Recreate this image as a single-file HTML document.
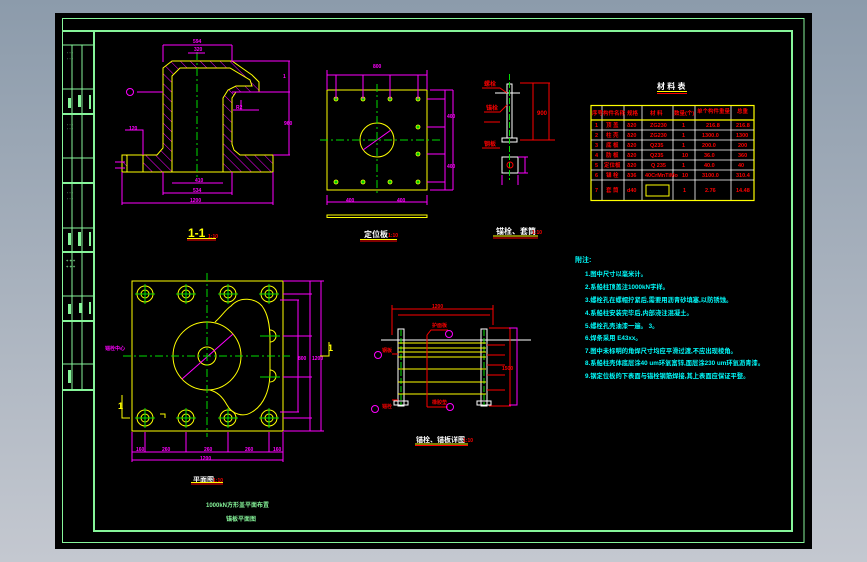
<!DOCTYPE html>
<html><head><meta charset="utf-8"><style>
html,body{margin:0;padding:0;width:867px;height:562px;overflow:hidden;background:linear-gradient(#8c9bab,#c4c8d0);}
svg{display:block}
text{font-family:"Liberation Sans","Noto Sans CJK SC",sans-serif;font-weight:bold}
</style></head><body>
<svg width="867" height="562" viewBox="0 0 867 562" xmlns="http://www.w3.org/2000/svg">
<defs>
<pattern id="h" width="7" height="7" patternUnits="userSpaceOnUse" patternTransform="rotate(-45)">
<line x1="0" y1="0" x2="0" y2="7" stroke="#ff00ff" stroke-width="1"/></pattern>
</defs>
<rect x="55" y="13" width="757" height="536" fill="#000"/>
<g fill="none" stroke="#86f59a">
<rect x="62.5" y="18.5" width="741.5" height="524" stroke-width="1"/>
<rect x="94" y="31" width="698" height="500" stroke-width="2"/>
<line x1="62" y1="31" x2="94" y2="31" stroke-width="2"/>
<g stroke-width="1"><line x1="62" y1="45" x2="94" y2="45"/><line x1="62" y1="89" x2="94" y2="89"/><line x1="62" y1="158" x2="94" y2="158"/><line x1="62" y1="228" x2="94" y2="228"/><line x1="62" y1="296" x2="94" y2="296"/><line x1="62" y1="364" x2="94" y2="364"/>
<line x1="72" y1="45" x2="72" y2="390"/><line x1="82" y1="45" x2="82" y2="390"/></g>
<g stroke-width="2"><line x1="62" y1="114" x2="94" y2="114"/><line x1="62" y1="183" x2="94" y2="183"/><line x1="62" y1="252" x2="94" y2="252"/><line x1="62" y1="321" x2="94" y2="321"/><line x1="62" y1="390" x2="94" y2="390"/></g>
</g>
<g fill="#86f59a" font-size="4">
<rect x="68" y="98" width="3" height="10"/><rect x="78" y="95" width="3" height="12"/><rect x="89" y="95" width="2" height="14"/>
<rect x="68" y="233" width="3" height="12"/><rect x="78" y="232" width="3" height="14"/><rect x="89" y="232" width="2" height="14"/>
<rect x="68" y="304" width="3" height="10"/><rect x="79" y="303" width="3" height="10"/><rect x="89" y="302" width="2" height="12"/>
<rect x="68" y="370" width="3" height="13"/>
<text x="67" y="54">· · ·</text><text x="67" y="60">· · ·</text><text x="67" y="126">· · ·</text><text x="67" y="130">· · ·</text><text x="67" y="194">· · ·</text><text x="67" y="200">· · ·</text><text x="66" y="262">+ + +</text><text x="66" y="268">+ + +</text>
</g>

<!-- Section 1-1 -->
<path d="M122,172 L273,172 L273,155 L240,155 L234,150 L232,144 L232,98 L236,92 L259,92 L259,82 L252,75 L232,61 L172,61 L163,68 L163,148 L157,155 L122,155 Z M172,172 L223,172 L223,98 L228,90 L236,86 L252,86 L250,80 L230,68 L180,68 L172,76 Z" fill="url(#h)" fill-rule="evenodd" stroke="#ffff00" stroke-width="1"/>
<rect x="127" y="155" width="16" height="17" fill="#000" stroke="#ffff00"/>
<line x1="197" y1="52" x2="197" y2="178" stroke="#00dd00" stroke-dasharray="8,3,2,3"/>
<g stroke="#ff00ff" fill="none">
<path d="M163,45 L232,45 M163,45 V62 M232,45 V62 M188,53 H205 M232,61 H290 M289,61 V155 M232,92 H290 M273,155 H290 M172,183 H223 M163,193 H232 M122,203 H273 M122,172 V205 M273,172 V205 M163,172 V195 M232,172 V195 M137,92 H163 M115,162 H125 M115,168 H125 M125,130 H143 V155 M233,110 H259 M241,100 V110"/>
<circle cx="130" cy="92" r="3.5"/>
</g>
<g fill="#ff00ff" font-size="5"><text x="193" y="43">594</text><text x="194" y="51">320</text><text x="195" y="182">410</text><text x="193" y="192">534</text><text x="190" y="202">1200</text><text x="283" y="78">1</text><text x="284" y="125">960</text><text x="129" y="130">120</text><text x="236" y="109">R2</text></g>
<text x="188" y="237" fill="#ffff00" font-size="12" font-weight="normal">1-1</text><text x="208" y="238" fill="#ff0000" font-size="5">1:10</text>
<line x1="187" y1="238.5" x2="216" y2="238.5" stroke="#ffff00"/><line x1="187" y1="240" x2="216" y2="240" stroke="#ff0000"/>

<!-- 定位板 -->
<rect x="327" y="90" width="100" height="100" fill="none" stroke="#ffff00"/>
<circle cx="377" cy="140" r="17" fill="none" stroke="#ffff00"/>
<line x1="363" y1="150" x2="391" y2="130" stroke="#ff00ff"/>
<g stroke="#00dd00" stroke-dasharray="8,3,2,3"><line x1="320" y1="140" x2="440" y2="140"/><line x1="377" y1="84" x2="377" y2="196"/></g>
<g fill="#00cc00" stroke="#ffff00" stroke-width="0.8">
<circle cx="336" cy="99" r="2"/><circle cx="363" cy="99" r="2"/><circle cx="390" cy="99" r="2"/><circle cx="418" cy="99" r="2"/>
<circle cx="336" cy="182" r="2"/><circle cx="363" cy="182" r="2"/><circle cx="390" cy="182" r="2"/><circle cx="418" cy="182" r="2"/>
<circle cx="418" cy="127" r="2"/><circle cx="418" cy="154" r="2"/></g>
<g stroke="#ff00ff" fill="none"><path d="M327,75 H427 M327,70 V90 M427,70 V90 M336,75 V99 M363,75 V99 M390,75 V99 M418,75 V99 M430,90 H453 M430,190 H453 M445,90 V190 M453,90 V190 M427,99 H445 M427,127 H445 M427,154 H445 M427,182 H445 M327,202 H427 M327,195 V205 M427,195 V205"/></g>
<g fill="#ff00ff" font-size="5"><text x="373" y="68">800</text><text x="346" y="202">400</text><text x="397" y="202">400</text><text x="447" y="118">400</text><text x="447" y="168">400</text></g>
<rect x="327" y="215" width="100" height="2.5" fill="none" stroke="#ffff00"/>
<text x="364" y="237" fill="#fff" font-size="8">定位板</text><text x="388" y="237" fill="#ff0000" font-size="5">1:10</text>
<line x1="360" y1="239.5" x2="397" y2="239.5" stroke="#ffff00"/><line x1="360" y1="241" x2="397" y2="241" stroke="#ff0000"/>

<!-- 锚栓 -->
<g stroke="#fff" fill="none"><rect x="507" y="84" width="5" height="54"/><line x1="495" y1="93" x2="520" y2="93"/><rect x="502" y="138" width="15" height="4"/><rect x="502" y="157" width="16" height="16"/></g>
<line x1="509.5" y1="74" x2="509.5" y2="180" stroke="#00dd00" stroke-dasharray="6,2"/>
<circle cx="510" cy="165" r="3" fill="none" stroke="#ff0000"/>
<g stroke="#ff0000" fill="none"><path d="M520,83 H550 M520,140 H555 M533,83 V140 M549,83 V140 M482,88 H500 L507,93 M484,112 H500 L507,105 M482,148 H500 M484,122 H500"/></g>
<g fill="#ff0000" font-size="6"><text x="484" y="86">螺栓</text><text x="486" y="110">锚栓</text><text x="537" y="115">900</text><text x="484" y="146">钢板</text></g>
<g stroke="#ff00ff" fill="none"><path d="M518,157 H528 M518,173 H528 M525,157 V173 M502,175 V185 M518,175 V185"/></g>
<text x="496" y="234" fill="#fff" font-size="8">锚栓、套筒</text><text x="532" y="234" fill="#ff0000" font-size="5">1:10</text>
<line x1="493" y1="236" x2="538" y2="236" stroke="#ffff00"/><line x1="493" y1="238" x2="538" y2="238" stroke="#ff0000"/>

<!-- 材料表 -->
<text x="657" y="89" fill="#fff" font-size="8">材 料 表</text>
<line x1="657" y1="91.5" x2="687" y2="91.5" stroke="#ffff00"/><line x1="657" y1="93.5" x2="687" y2="93.5" stroke="#ff0000"/>
<rect x="591" y="105.5" width="163" height="95" fill="none" stroke="#ffff00" stroke-width="1.2"/>
<g stroke="#fff" stroke-width="0.8"><line x1="602" y1="106" x2="602" y2="200"/><line x1="624" y1="106" x2="624" y2="200"/><line x1="642" y1="106" x2="642" y2="200"/><line x1="673" y1="106" x2="673" y2="200"/><line x1="695" y1="106" x2="695" y2="200"/><line x1="731" y1="106" x2="731" y2="200"/>
<line x1="591" y1="130" x2="754" y2="130"/><line x1="591" y1="140" x2="754" y2="140"/><line x1="591" y1="150" x2="754" y2="150"/><line x1="591" y1="160" x2="754" y2="160"/><line x1="591" y1="170" x2="754" y2="170"/><line x1="591" y1="180" x2="754" y2="180"/></g>
<line x1="591" y1="120" x2="754" y2="120" stroke="#ffff00" stroke-width="1.2"/>
<g fill="#ff0000" font-size="5.5">
<text x="592" y="115">序号</text><text x="603" y="115">构件名称</text><text x="627" y="115">规格</text><text x="650" y="115">材 料</text><text x="674" y="115">数量(个)</text><text x="697" y="113">单个构件重量</text><text x="737" y="113">总重</text>
<text x="595" y="127">1</text><text x="606" y="127">顶 盖</text><text x="627" y="127">δ20</text><text x="650" y="127">ZG230</text><text x="682" y="127">1</text><text x="706" y="127">216.8</text><text x="736" y="127">216.8</text>
<text x="595" y="137">2</text><text x="606" y="137">柱 壳</text><text x="627" y="137">δ20</text><text x="650" y="137">ZG230</text><text x="682" y="137">1</text><text x="702" y="137">1300.0</text><text x="736" y="137">1300</text>
<text x="595" y="147">3</text><text x="606" y="147">底 板</text><text x="627" y="147">δ20</text><text x="650" y="147">Q235</text><text x="682" y="147">1</text><text x="702" y="147">200.0</text><text x="738" y="147">200</text>
<text x="595" y="157">4</text><text x="606" y="157">肋 板</text><text x="627" y="157">δ20</text><text x="650" y="157">Q235</text><text x="682" y="157">10</text><text x="704" y="157">36.0</text><text x="738" y="157">360</text>
<text x="595" y="167">5</text><text x="604" y="167">定位板</text><text x="627" y="167">δ20</text><text x="651" y="167">Q 235</text><text x="682" y="167">1</text><text x="704" y="167">40.0</text><text x="738" y="167">40</text>
<text x="595" y="177">6</text><text x="606" y="177">锚 栓</text><text x="627" y="177">δ36</text><text x="645" y="177">40CrMnTiMo</text><text x="682" y="177">10</text><text x="702" y="177">3100.0</text><text x="736" y="177">310.4</text>
<text x="595" y="192">7</text><text x="606" y="192">套 筒</text><text x="627" y="192">d40</text><text x="683" y="192">1</text><text x="705" y="192">2.76</text><text x="736" y="192">14.48</text></g>
<rect x="646" y="185" width="23" height="11" fill="none" stroke="#ffff00"/>

<!-- 平面图 -->
<rect x="132" y="281" width="151" height="150" fill="none" stroke="#ffff00"/>
<path d="M215,322 C222,316 225,310 231,306 C240,296 255,298 262,306 C268,314 270,325 270,340 L270,372 C270,390 264,405 252,412 C243,418 232,414 227,405 C222,396 217,392 210,390" fill="none" stroke="#ffff00"/>
<circle cx="207" cy="356" r="34" fill="#000" stroke="#ffff00"/>
<circle cx="207" cy="356" r="9" fill="none" stroke="#ffff00"/>
<path d="M270,330 A6,6 0 0 1 270,342 M270,370 A6,6 0 0 1 270,382" fill="none" stroke="#ffff00"/>
<line x1="182" y1="379" x2="233" y2="334" stroke="#ff00ff"/>
<g fill="none" stroke="#ffff00">
<circle cx="145" cy="294" r="8"/><circle cx="145" cy="294" r="4"/><circle cx="186" cy="294" r="8"/><circle cx="186" cy="294" r="4"/><circle cx="228" cy="294" r="8"/><circle cx="228" cy="294" r="4"/><circle cx="269" cy="294" r="8"/><circle cx="269" cy="294" r="4"/>
<circle cx="145" cy="418" r="8"/><circle cx="145" cy="418" r="4"/><circle cx="186" cy="418" r="8"/><circle cx="186" cy="418" r="4"/><circle cx="228" cy="418" r="8"/><circle cx="228" cy="418" r="4"/><circle cx="269" cy="418" r="8"/><circle cx="269" cy="418" r="4"/></g>
<g stroke="#00dd00"><path d="M135,294 H155 M176,294 H196 M218,294 H238 M259,294 H279 M135,418 H155 M176,418 H196 M218,418 H238 M259,418 H279 M145,284 V304 M186,284 V304 M228,284 V304 M269,284 V304 M145,408 V428 M186,408 V428 M228,408 V428 M269,408 V428 M260,336 H280 M260,377 H280"/></g>
<g stroke="#00dd00" stroke-dasharray="8,3,2,3"><line x1="123" y1="356" x2="290" y2="356"/><line x1="207" y1="273" x2="207" y2="437"/></g>
<g stroke="#ff00ff" fill="none"><path d="M283,281 H324 M283,431 H324 M321,281 V431 M310,281 V431 M283,294 H312 M283,418 H312 M283,336 H312 M283,377 H312 M280,300 H299 M280,412 H299 M298,300 V412 M132,432 V462 M283,432 V462 M132,452 H283 M132,460 H283 M145,432 V452 M186,432 V452 M228,432 V452 M269,432 V452"/></g>
<g fill="#ff00ff" font-size="5"><text x="136" y="451">160</text><text x="162" y="451">260</text><text x="204" y="451">260</text><text x="245" y="451">260</text><text x="273" y="451">160</text><text x="200" y="460">1200</text><text x="312" y="360">1200</text><text x="298" y="360">800</text><text x="105" y="350">锚栓中心</text></g>
<g stroke="#ffff00" fill="none"><path d="M122,395 V418 H130 M329,342 V356 H320 M160,414 H165 V418"/></g>
<text x="118" y="409" fill="#ffff00" font-size="9" font-weight="normal">1</text><text x="328" y="351" fill="#ffff00" font-size="9" font-weight="normal">1</text>
<text x="193" y="482" fill="#fff" font-size="7">平面图</text><text x="213" y="482" fill="#ff0000" font-size="5">1:10</text>
<line x1="191" y1="482.5" x2="223" y2="482.5" stroke="#ffff00"/><line x1="191" y1="484" x2="223" y2="484" stroke="#ff0000"/>
<text x="206" y="507" fill="#86f59a" font-size="6">1000kN方形盖平面布置</text>
<text x="226" y="521" fill="#86f59a" font-size="6">锚板平面图</text>

<!-- 锚栓详图 -->
<line x1="381" y1="340" x2="531" y2="340" stroke="#fff"/>
<g fill="none" stroke="#fff"><rect x="398" y="329" width="6" height="77"/><rect x="481" y="329" width="6" height="77"/><rect x="394" y="401" width="14" height="4"/><rect x="477" y="401" width="14" height="4"/></g>
<g stroke="#00dd00"><line x1="401" y1="330" x2="401" y2="405" stroke-dasharray="6,2"/><line x1="484" y1="330" x2="484" y2="405" stroke-dasharray="6,2"/></g>
<g stroke="#ffff00"><line x1="398" y1="343" x2="486" y2="343"/><line x1="398" y1="348" x2="486" y2="348"/><line x1="398" y1="352" x2="486" y2="352"/><line x1="398" y1="357" x2="486" y2="357"/><line x1="398" y1="369" x2="486" y2="369"/><line x1="398" y1="382" x2="486" y2="382"/><line x1="398" y1="394" x2="486" y2="394"/></g>
<g stroke="#ff0000" fill="none"><path d="M427,335 V407 M392,309 H493 M398,315 H490 M392,305 V335 M493,305 V325 M489,328 H511 M489,406 H511 M510,328 V406 M487,345 H505 M487,355 H505 M487,365 H505 M487,375 H505 M487,390 H505 M427,335 L431,330 H448 M427,407 H448 M392,354 H398 M392,400 H398"/></g>
<path d="M509,328 H517 V405 H509" fill="none" stroke="#ff00ff"/>
<g fill="#ff0000" font-size="5"><text x="432" y="308">1200</text><text x="432" y="327">护面板</text><text x="432" y="404">橡胶垫</text><text x="382" y="352">钢板</text><text x="382" y="408">锚栓</text><text x="502" y="370">1500</text></g>
<g fill="none" stroke="#ff00ff"><circle cx="378" cy="355" r="3.5"/><circle cx="375" cy="409" r="3.5"/><circle cx="449" cy="334" r="3.5"/><circle cx="450" cy="407" r="3.5"/></g>
<text x="416" y="442" fill="#fff" font-size="7">锚栓、锚板详图</text><text x="463" y="442" fill="#ff0000" font-size="5">1:10</text>
<line x1="415" y1="444" x2="468" y2="444" stroke="#ffff00"/><line x1="415" y1="445.5" x2="468" y2="445.5" stroke="#ff0000"/>

<!-- 附注 -->
<g fill="#00ffff" font-size="6.3">
<text x="575" y="262" font-size="7">附注:</text>
<text x="585" y="276">1.图中尺寸以毫米计。</text>
<text x="585" y="289">2.系船柱顶盖注1000kN字样。</text>
<text x="585" y="302">3.螺栓孔在螺帽拧紧后,需要用沥青砂填塞,以防锈蚀。</text>
<text x="585" y="315">4.系船柱安装完毕后,内部浇注混凝土。</text>
<text x="585" y="328">5.螺栓孔壳油漆一遍。 3。</text>
<text x="585" y="340">6.焊条采用 E43xx。</text>
<text x="585" y="353">7.图中未标明的角焊尺寸均应平滑过渡,不应出现棱角。</text>
<text x="585" y="365">8.系船柱壳体底层涂40 um环氧富锌,面层涂230 um环氧沥青漆。</text>
<text x="585" y="378">9.钢定位板的下表面与锚栓钢筋焊接,其上表面应保证平整。</text>
</g>
</svg>
</body></html>
